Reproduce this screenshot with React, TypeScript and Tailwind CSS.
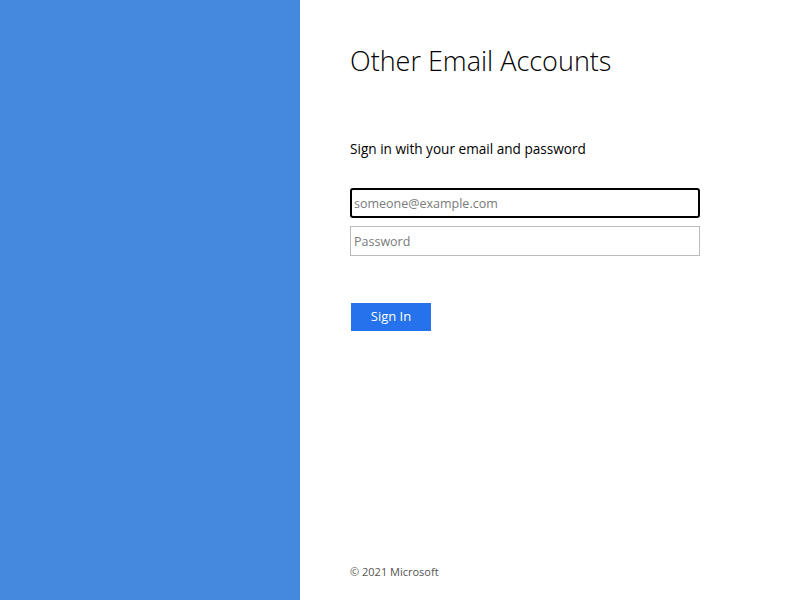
export default function App() {
  return (
    <div className="flex h-[600px] w-[800px] bg-white font-['Open_Sans',sans-serif]">
      {/* Left brand panel */}
      <div className="w-[300px] shrink-0 bg-[#4489dd]" />

      {/* Sign in form */}
      <div className="flex flex-1 flex-col pl-[50px]">
        <h1 className="mt-[41px] text-[27px] font-light leading-[40px] text-black">
          Other Email Accounts
        </h1>
        <p className="mt-[58px] text-[13.6px] leading-[20px] text-black">
          Sign in with your email and password
        </p>

        <div className="mt-[29px] flex w-[350px] flex-col gap-[8px]">
          <input
            type="email"
            autoFocus
            placeholder="someone@example.com"
            className="h-[30px] w-full rounded-[3px] border-2 border-black px-[2px] text-[12.5px] text-black outline-none placeholder:text-[#7a7a7a]"
          />
          <input
            type="password"
            placeholder="Password"
            className="h-[30px] w-full border border-[#bbbbbb] px-[3px] text-[12.5px] text-black outline-none placeholder:text-[#7a7a7a]"
          />
        </div>

        <button className="ml-px mt-[47px] h-[28px] w-[80px] bg-[#2672ec] text-[13px] text-white">
          Sign In
        </button>

        <p className="mb-[20px] mt-auto text-[11px] text-[#555555]">© 2021 Microsoft</p>
      </div>
    </div>
  );
}
